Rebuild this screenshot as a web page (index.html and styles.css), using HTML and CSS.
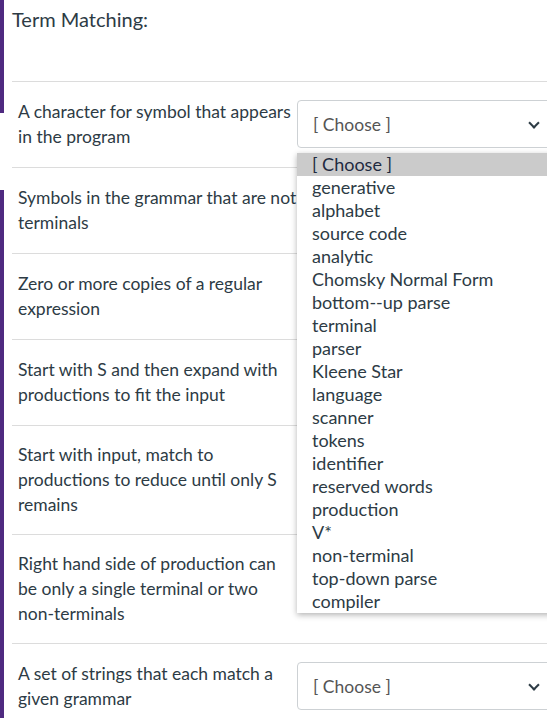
FILE: index.html
```
<!DOCTYPE html>
<html lang="en">
<head>
  <meta charset="UTF-8">
  <title>Term Matching</title>
  <link rel="stylesheet" href="styles.css">
</head>
<body>

<div class="quiz">
  <div class="question-title">Term Matching:</div>

  <div class="rows">
    <div class="row">
      <div class="term">A character for symbol that appears in the program</div>
      <div class="select open">[ Choose ]<span class="chevron"></span></div>
    </div>
    <div class="row">
      <div class="term">Symbols in the grammar that are not terminals</div>
      <div class="select">[ Choose ]<span class="chevron"></span></div>
    </div>
    <div class="row">
      <div class="term">Zero or more copies of a regular expression</div>
      <div class="select">[ Choose ]<span class="chevron"></span></div>
    </div>
    <div class="row">
      <div class="term">Start with S and then expand with productions to fit the input</div>
      <div class="select">[ Choose ]<span class="chevron"></span></div>
    </div>
    <div class="row">
      <div class="term">Start with input, match to productions to reduce until only S remains</div>
      <div class="select">[ Choose ]<span class="chevron"></span></div>
    </div>
    <div class="row">
      <div class="term">Right hand side of production can be only a single terminal or two non-terminals</div>
      <div class="select">[ Choose ]<span class="chevron"></span></div>
    </div>
    <div class="row">
      <div class="term">A set of strings that each match a given grammar</div>
      <div class="select">[ Choose ]<span class="chevron"></span></div>
    </div>
  </div>
</div>

<ul class="options">
  <li class="active">[ Choose ]</li>
  <li>generative</li>
  <li>alphabet</li>
  <li>source code</li>
  <li>analytic</li>
  <li>Chomsky Normal Form</li>
  <li>bottom--up parse</li>
  <li>terminal</li>
  <li>parser</li>
  <li>Kleene Star</li>
  <li>language</li>
  <li>scanner</li>
  <li>tokens</li>
  <li>identifier</li>
  <li>reserved words</li>
  <li>production</li>
  <li>V*</li>
  <li>non-terminal</li>
  <li>top-down parse</li>
  <li>compiler</li>
</ul>

</body>
</html>
```

FILE: styles.css
```
* {
  box-sizing: border-box;
}

html, body {
  margin: 0;
  padding: 0;
  height: 100%;
  overflow: hidden;
}

body {
  font-family: Lato, "Open Sans", sans-serif;
  color: #2d3b45;
  background: #fff linear-gradient(to bottom, #4f2a80 0, #4f2a80 113px, transparent 113px, transparent 190px, #4f2a80 190px) no-repeat 0 0 / 4px 100%;
  position: relative;
}

.quiz {
  padding-left: 12px;
  width: 560px;
}

.question-title {
  font-size: 20px;
  height: 81px;
  padding-top: 7px;
  color: #2d3b45;
}

.row {
  display: flex;
  align-items: center;
  border-top: 1px solid #dcdcdc;
  padding: 16px 0 17px;
}

.term {
  flex: 0 0 285px;
  padding-left: 6px;
  font-size: 17.5px;
  line-height: 25px;
}

.select {
  flex-shrink: 0;
  position: relative;
  width: 262px;
  height: 48px;
  margin: 2px 0;
  border: 1px solid #cdd1d4;
  border-radius: 4px;
  padding: 0 15px;
  display: flex;
  align-items: center;
  font-size: 17.5px;
  color: #555;
}

.chevron {
  position: absolute;
  right: 20px;
  top: 18px;
  width: 8px;
  height: 8px;
  border-right: 2px solid #2d3b45;
  border-bottom: 2px solid #2d3b45;
  transform: rotate(45deg);
}

.options {
  position: absolute;
  top: 153px;
  left: 297px;
  width: 262px;
  margin: 0;
  padding: 0;
  list-style: none;
  background: #fff;
  box-shadow: 0 2px 6px rgba(0,0,0,0.3);
  font-size: 18px;
}

.options li {
  height: 23px;
  line-height: 23px;
  padding-left: 15px;
  color: #2d3b45;
}

.options li.active {
  background: #cbcbcb;
  color: #1f2a40;
}
```
